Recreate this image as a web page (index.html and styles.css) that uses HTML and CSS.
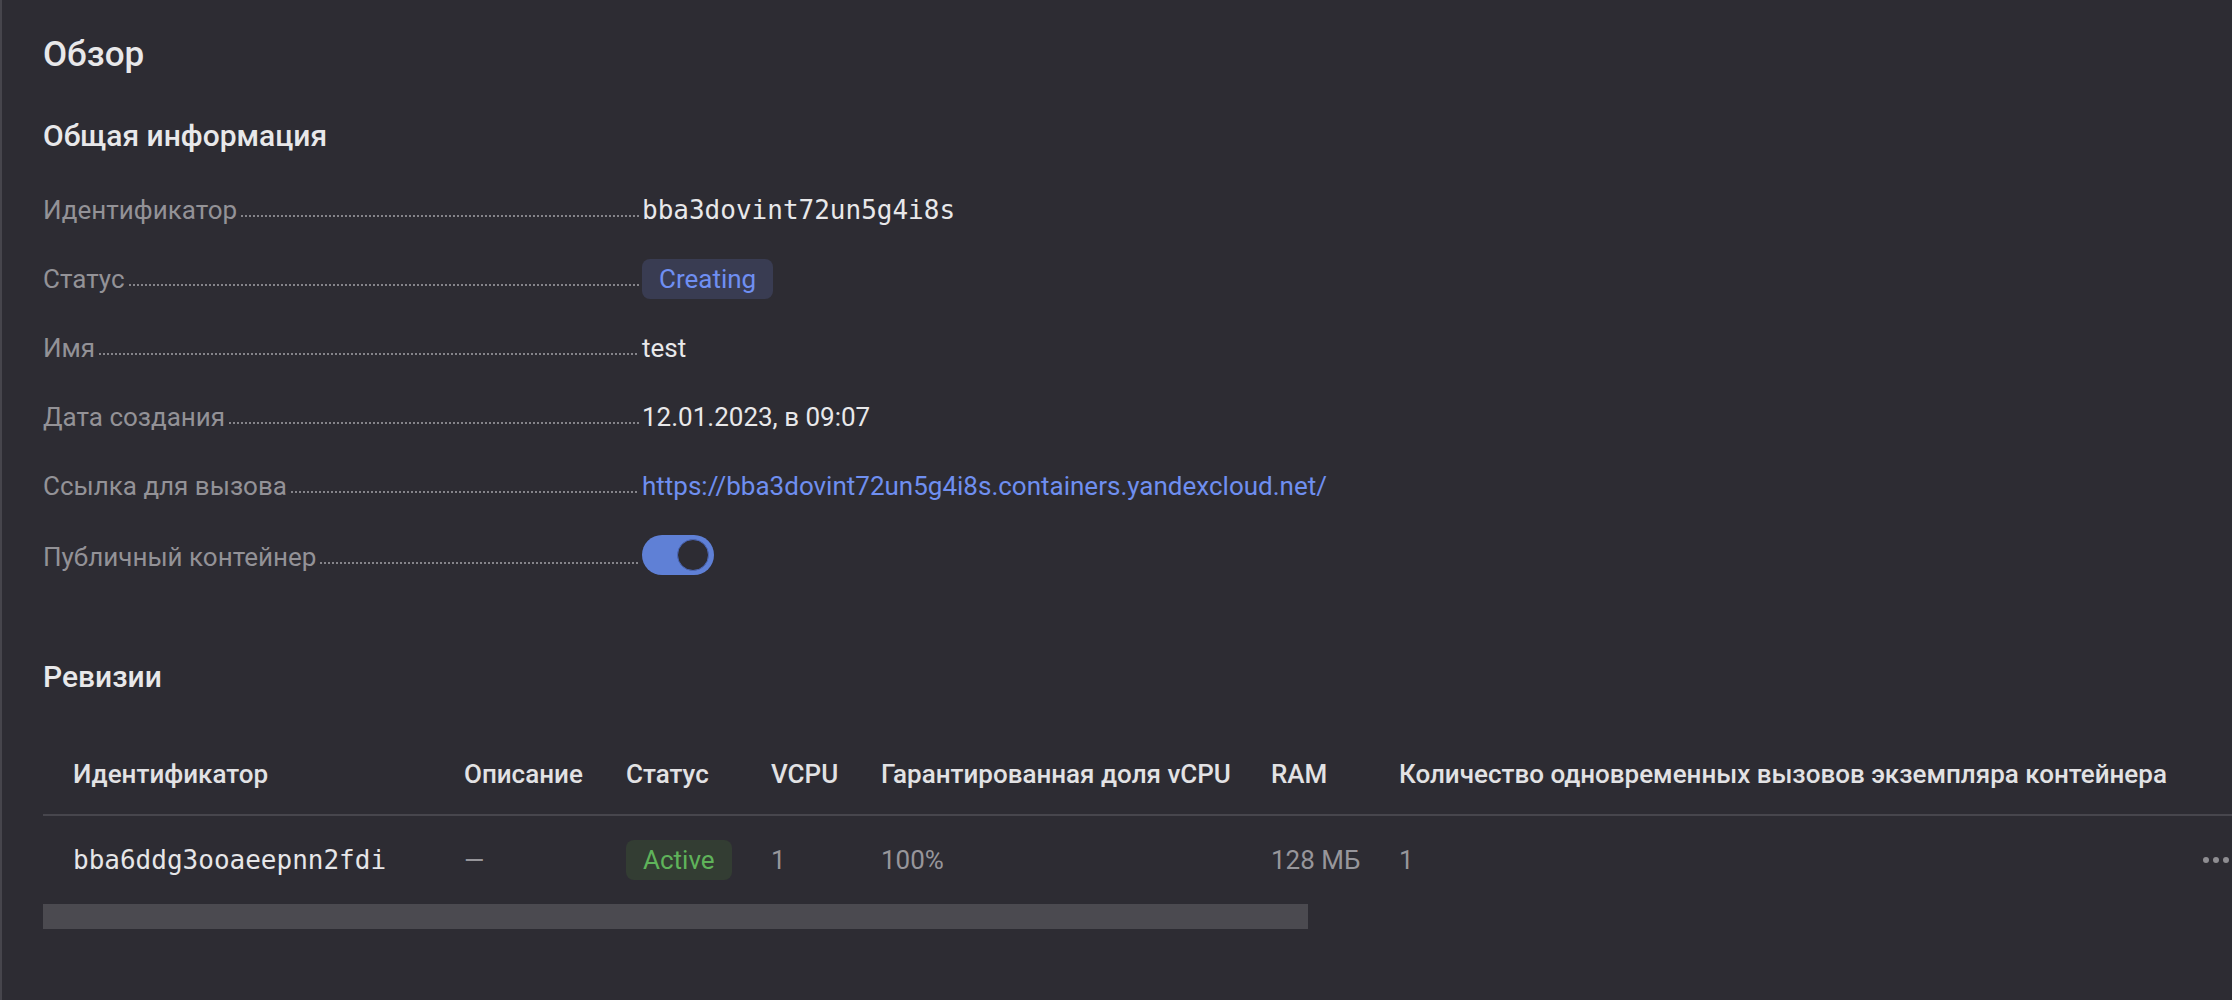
FILE: index.html
```html
<!DOCTYPE html>
<html lang="ru">
<head>
<meta charset="utf-8">
<title>Обзор</title>
<link rel="stylesheet" href="styles.css">
</head>
<body>
<div class="page">
  <h1 class="title">Обзор</h1>
  <h2 class="section-title">Общая информация</h2>
  <div class="props">
    <div class="prop">
      <div class="term"><span class="term-text">Идентификатор</span><span class="dots"></span></div>
      <div class="value mono">bba3dovint72un5g4i8s</div>
    </div>
    <div class="prop">
      <div class="term"><span class="term-text">Статус</span><span class="dots"></span></div>
      <div class="value"><span class="badge badge-info">Creating</span></div>
    </div>
    <div class="prop">
      <div class="term"><span class="term-text">Имя</span><span class="dots"></span></div>
      <div class="value">test</div>
    </div>
    <div class="prop">
      <div class="term"><span class="term-text">Дата создания</span><span class="dots"></span></div>
      <div class="value">12.01.2023, в 09:07</div>
    </div>
    <div class="prop">
      <div class="term"><span class="term-text">Ссылка для вызова</span><span class="dots"></span></div>
      <div class="value"><a class="link" href="#">https://bba3dovint72un5g4i8s.containers.yandexcloud.net/</a></div>
    </div>
    <div class="prop prop-switch">
      <div class="term"><span class="term-text">Публичный контейнер</span><span class="dots"></span></div>
      <div class="value"><span class="switch"><span class="switch-knob"></span></span></div>
    </div>
  </div>

  <h2 class="section-title revisions-title">Ревизии</h2>
  <div class="table">
    <div class="row head">
      <div class="cell">Идентификатор</div>
      <div class="cell">Описание</div>
      <div class="cell">Статус</div>
      <div class="cell">VCPU</div>
      <div class="cell">Гарантированная доля vCPU</div>
      <div class="cell">RAM</div>
      <div class="cell">Количество одновременных вызовов экземпляра контейнера</div>
      <div class="cell"></div>
    </div>
    <div class="row body-row">
      <div class="cell mono bright">bba6ddg3ooaeepnn2fdi</div>
      <div class="cell">—</div>
      <div class="cell"><span class="badge badge-success">Active</span></div>
      <div class="cell">1</div>
      <div class="cell">100%</div>
      <div class="cell">128 МБ</div>
      <div class="cell">1</div>
      <div class="cell actions">
        <svg class="more" width="40" height="8" viewBox="0 0 40 8"><circle cx="4" cy="4" r="3"/><circle cx="14" cy="4" r="3"/><circle cx="24" cy="4" r="3"/></svg>
      </div>
    </div>
  </div>
  <div class="scrollbar"><div class="scroll-thumb"></div></div>
</div>
</body>
</html>
```
FILE: styles.css
```css
html, body {
  margin: 0;
  padding: 0;
  background: #2d2c33;
  overflow: hidden;
}
body {
  font-family: "Roboto", "Noto Sans", sans-serif;
  color: #e4e4e6;
  font-size: 26px;
}
.page {
  min-height: 1000px;
  box-sizing: border-box;
  border-left: 2px solid #46454c;
  padding: 35px 0 0 41px;
}
.title {
  margin: 0;
  font-size: 35px;
  line-height: 40px;
  font-weight: 500;
  color: #e8e8ea;
}
.section-title {
  margin: 43px 0 0;
  font-size: 30px;
  line-height: 36px;
  font-weight: 500;
  color: #e8e8ea;
}
.props {
  margin-top: 36px;
  display: flex;
  flex-direction: column;
  gap: 29px;
}
.prop {
  display: flex;
  align-items: center;
  height: 40px;
}
.term {
  flex: 0 0 599px;
  display: flex;
  align-items: baseline;
  color: #939297;
  line-height: 40px;
}
.prop-switch .term {
  padding-top: 4px;
}
.dots {
  flex: 1;
  height: 2px;
  margin: 0 3px 0 4px;
  background-image: linear-gradient(to right, #85848a 50%, transparent 50%);
  background-size: 4px 2px;
  background-repeat: repeat-x;
  transform: translateY(-2px);
}
.value {
  line-height: 40px;
  color: #e8e8ea;
}
.mono {
  font-family: "DejaVu Sans Mono", "Liberation Mono", monospace;
}
.badge {
  display: inline-block;
  height: 40px;
  line-height: 40px;
  padding: 0 17px;
  border-radius: 8px;
}
.badge-info {
  background: #393c52;
  color: #6f8ff2;
}
.badge-success {
  background: #333d33;
  color: #5fb35a;
}
.link {
  color: #6f8ff0;
  text-decoration: none;
}
.switch {
  display: block;
  width: 72px;
  height: 40px;
  border-radius: 20px;
  background: #5f80d6;
  position: relative;
}
.switch-knob {
  position: absolute;
  right: 5px;
  top: 4px;
  width: 30px;
  height: 30px;
  border-radius: 50%;
  background: #2d2c33;
  border: 1px solid #4b67b8;
}
.revisions-title {
  margin-top: 84px;
}
.table {
  margin-top: 34px;
  width: 2300px;
}
.row {
  display: grid;
  grid-template-columns: 391px 162px 145px 110px 390px 128px 803px 80px;
  padding-left: 30px;
  line-height: 40px;
}
.head {
  padding-top: 25px;
  padding-bottom: 20px;
  border-bottom: 2px solid #47464d;
  font-weight: 500;
  color: #e2e2e4;
}
.body-row {
  padding-top: 24px;
  padding-bottom: 24px;
  color: #97969b;
}
.cell {
  white-space: nowrap;
}
.bright {
  color: #e6e6e8;
}
.actions {
  display: flex;
  align-items: center;
}
.more {
  fill: #8e8d92;
}
.scrollbar {
  width: 1265px;
  height: 25px;
}
.scroll-thumb {
  height: 100%;
  background: #4b4a50;
}
```
